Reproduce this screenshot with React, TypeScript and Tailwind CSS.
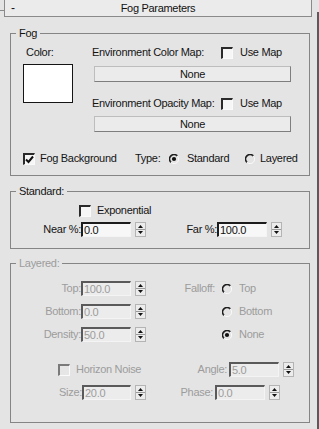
import React from "react";

const Checkbox = ({ checked = false, disabled = false }: { checked?: boolean; disabled?: boolean }) => (
  <span
    className={`inline-flex shrink-0 w-[12px] h-[12px] border-t-2 border-l-2 border-r border-b border-r-[#fafafa] border-b-[#fafafa] items-center justify-center ${
      disabled ? "border-t-[#7a7a7a] border-l-[#7a7a7a] bg-[#e6e6e6]" : "border-t-[#2a2a2a] border-l-[#2a2a2a] bg-[#f6f6f6]"
    }`}
  >
    {checked && (
      <svg width="9" height="9" viewBox="0 0 9 9">
        <path d="M1 4.5 L3.5 7 L8 1.5" stroke="#111" strokeWidth="2" fill="none" />
      </svg>
    )}
  </span>
);

const Radio = ({ checked = false }: { checked?: boolean }) => (
  <svg width="10" height="10" viewBox="0 0 10 10" className="shrink-0">
    <path d="M8.3 1.9 A4.3 4.3 0 0 0 1.9 8.3" stroke="#1e1e1e" strokeWidth="1.7" fill="none" />
    <path d="M1.9 8.3 A4.3 4.3 0 0 0 8.3 1.9" stroke="#fafafa" strokeWidth="1" fill="none" />
    {checked && <circle cx="5" cy="5" r="2.1" fill="#111" />}
  </svg>
);

const Spinner = ({ value, disabled = false, width = "w-[50px]" }: { value: string; disabled?: boolean; width?: string }) => (
  <div className="flex items-center">
    <div
      className={`${width} h-[15px] border-t-2 border-l-2 border-r border-b border-r-[#f4f4f4] border-b-[#f4f4f4] pl-[1px] leading-[12px] ${
        disabled
          ? "border-t-[#5a5a5a] border-l-[#5a5a5a] bg-[#ececec] text-[#9c9c9c]"
          : "border-t-[#1c1c1c] border-l-[#1c1c1c] bg-[#f7f7f7] text-[#111]"
      }`}
    >
      {value}
    </div>
    <svg width="11" height="15" viewBox="0 0 11 15" className="ml-[4px]">
      <rect x="0.5" y="0.5" width="10" height="14" fill="#ececec" stroke="#b4b4b4" />
      <line x1="1" y1="7.5" x2="10" y2="7.5" stroke="#9a9a9a" />
      <path d="M3 6 L8 6 L5.5 3 Z" fill="#111" />
      <path d="M3 9 L8 9 L5.5 12 Z" fill="#111" />
    </svg>
  </div>
);

const MapButton = () => (
  <div className="ml-[2px] w-[197px] h-[16px] border border-t-[#bdbdbd] border-l-[#bdbdbd] border-b-[#7e7e7e] border-r-[#7e7e7e] bg-[#ebebeb] flex items-center justify-center leading-[13px]">
    None
  </div>
);

export default function App() {
  return (
    <div className="w-[319px] h-[429px] bg-[#e4e4e4] overflow-hidden flex font-['Liberation_Sans',Arial,sans-serif] text-[11px] tracking-[-0.3px] text-[#141414]">
      <div className="w-[317px]">
        {/* === HEADER === */}
        <div className="flex">
          <div className="mt-[10px] w-[4px] h-px bg-[#8a8a8a]" />
          <div className="w-[308px] h-[18px] -mt-px border border-[#8a8a8a] bg-[#ebebeb] grid grid-cols-[1fr_auto_1fr] items-center leading-[13px]">
            <span className="pl-[6px] text-[12px]">-</span>
            <span className="text-[#111]">Fog Parameters</span>
            <span />
          </div>
        </div>

        {/* === FOG === */}
        <fieldset className="mt-[9px] ml-[10px] w-[300px] border border-[#858585] pb-[10px]">
          <legend className="ml-[5px] px-[3px] leading-[14px]">Fog</legend>
          <div className="flex pt-[6px] pl-[12px]">
            <div className="w-[50px]">
              <div className="pl-[3px] leading-[13px]">Color:</div>
              <div className="mt-[5px] w-[50px] h-[39px] border border-[#151515] bg-white" />
            </div>
            <div className="ml-[19px] w-[200px]">
              <div className="flex items-center h-[13px]">
                <span className="w-[129px] whitespace-nowrap">Environment Color Map:</span>
                <Checkbox />
                <span className="ml-[7px]">Use Map</span>
              </div>
              <div className="mt-[7px]">
                <MapButton />
              </div>
              <div className="flex items-center h-[13px] mt-[15px]">
                <span className="w-[129px] whitespace-nowrap">Environment Opacity Map:</span>
                <Checkbox />
                <span className="ml-[7px]">Use Map</span>
              </div>
              <div className="mt-[6px]">
                <MapButton />
              </div>
            </div>
          </div>
          <div className="flex items-center h-[13px] mt-[20px] pl-[12px]">
            <Checkbox checked />
            <span className="ml-[5px] w-[95px] whitespace-nowrap">Fog Background</span>
            <span className="w-[34px]">Type:</span>
            <Radio checked />
            <span className="ml-[8px] w-[58px]">Standard</span>
            <Radio />
            <span className="ml-[5px]">Layered</span>
          </div>
        </fieldset>

        {/* === STANDARD === */}
        <fieldset className="mt-[8px] ml-[10px] w-[300px] border border-[#858585] pb-[11px]">
          <legend className="ml-[5px] px-[3px] leading-[14px]">Standard:</legend>
          <div className="flex items-center h-[13px] mt-[6px] pl-[68px]">
            <Checkbox />
            <span className="ml-[6px]">Exponential</span>
          </div>
          <div className="flex items-center mt-[5px] leading-[13px]">
            <span className="w-[70px] text-right">Near %:</span>
            <Spinner value="0.0" />
            <span className="w-[71px] text-right">Far %:</span>
            <Spinner value="100.0" />
          </div>
        </fieldset>

        {/* === LAYERED (disabled) === */}
        <fieldset className="mt-[7px] ml-[10px] w-[300px] border border-[#858585] pb-[22px] text-[#9c9c9c]">
          <legend className="ml-[5px] px-[3px] leading-[14px]">Layered:</legend>
          <div className="flex flex-col gap-[8px] mt-[11px]">
            <div className="flex items-center leading-[13px]">
              <span className="w-[70px] text-right">Top:</span>
              <Spinner value="100.0" disabled />
              <span className="w-[69px] text-right">Falloff:</span>
              <span className="ml-[7px] flex items-center">
                <Radio />
              </span>
              <span className="ml-[7px]">Top</span>
            </div>
            <div className="flex items-center leading-[13px]">
              <span className="w-[70px] text-right">Bottom:</span>
              <Spinner value="0.0" disabled />
              <span className="w-[69px]" />
              <span className="ml-[7px] flex items-center">
                <Radio />
              </span>
              <span className="ml-[7px]">Bottom</span>
            </div>
            <div className="flex items-center leading-[13px]">
              <span className="w-[70px] text-right">Density:</span>
              <Spinner value="50.0" disabled />
              <span className="w-[69px]" />
              <span className="ml-[7px] flex items-center">
                <Radio checked />
              </span>
              <span className="ml-[7px]">None</span>
            </div>
          </div>
          <div className="flex flex-col gap-[8px] mt-[20px]">
            <div className="flex items-center h-[15px] leading-[13px]">
              <span className="ml-[47px] flex items-center">
                <Checkbox disabled />
              </span>
              <span className="ml-[6px] w-[84px] whitespace-nowrap">Horizon Noise</span>
              <span className="w-[69px] text-right pr-[2px]">Angle:</span>
              <Spinner value="5.0" disabled />
            </div>
            <div className="flex items-center leading-[13px]">
              <span className="w-[71px] text-right">Size:</span>
              <Spinner value="20.0" disabled width="w-[49px]" />
              <span className="w-[69px] text-right pr-[2px]">Phase:</span>
              <Spinner value="0.0" disabled />
            </div>
          </div>
        </fieldset>
      </div>
      <div className="mt-[12px] w-[2px] h-[440px] bg-[#5a5a5a]" />
    </div>
  );
}
